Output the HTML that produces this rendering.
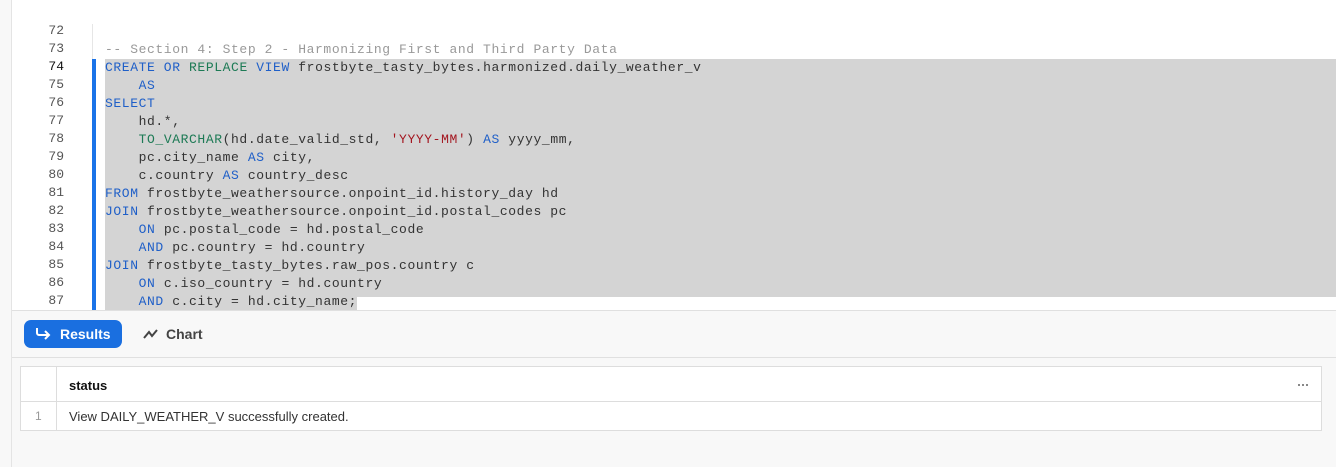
<!DOCTYPE html>
<html><head><style>
*{margin:0;padding:0;box-sizing:border-box}
body{width:1336px;height:467px;overflow:hidden;background:#f8f8f8;font-family:"Liberation Sans",sans-serif;position:relative}
.left{position:absolute;left:0;top:0;width:12px;height:467px;background:#f8f8f8;border-right:1px solid #e4e4e4}
.ed{position:absolute;left:12px;top:0;width:1324px;height:311px;background:#fff;border-bottom:1px solid #e0e0e0}
.ln{position:absolute;left:0;width:52px;text-align:right;font:13px "Liberation Mono",monospace;color:#555;line-height:18px}
.guide{position:absolute;left:80px;top:24px;width:1px;height:36px;background:#e6e6e6}
.bar{position:absolute;left:80px;top:59px;width:4px;height:251px;background:#1a73e8}
.sel{position:absolute;left:93px;top:59px;width:1231px;height:238px;background:#d4d4d4}
.sel2{position:absolute;left:93px;top:297px;width:252px;height:13px;background:#d4d4d4}
.code{position:absolute;left:93px;top:41px;font:13px "Liberation Mono",monospace;line-height:18px;color:#333;white-space:pre;letter-spacing:0.6px}
.k{color:#1f5fc8}.g{color:#1d7a55}.s{color:#a3151f}.c{color:#999}
.btn{position:absolute;left:24px;top:320px;width:98px;height:28px;background:#1a6fe0;border-radius:7px;color:#fff;font-weight:bold;font-size:14px;line-height:28px;padding-left:36px}
.chart{position:absolute;left:143px;top:320px;height:28px;line-height:28px;color:#444;font-weight:bold;font-size:14px;padding-left:23px}
.tbsep{position:absolute;left:12px;top:357px;width:1324px;height:1px;background:#e0e0e0}
.tbl{position:absolute;left:20px;top:366px;width:1302px;height:65px;background:#fff;border:1px solid #ddd}
</style></head><body>
<div class="left"></div>
<div class="ed">
<div class="guide"></div>
<div class="sel"></div><div class="sel2"></div>
<div class="bar"></div>
<div class="ln" style="top:22px">72<br>73<br><span style="color:#111">74</span><br>75<br>76<br>77<br>78<br>79<br>80<br>81<br>82<br>83<br>84<br>85<br>86<br>87</div>
<div class="code"><span class="c">-- Section 4: Step 2 - Harmonizing First and Third Party Data</span>
<span class="k">CREATE OR</span> <span class="g">REPLACE</span> <span class="k">VIEW</span> frostbyte_tasty_bytes.harmonized.daily_weather_v
    <span class="k">AS</span>
<span class="k">SELECT</span>
    hd.*,
    <span class="g">TO_VARCHAR</span>(hd.date_valid_std, <span class="s">'YYYY-MM'</span>) <span class="k">AS</span> yyyy_mm,
    pc.city_name <span class="k">AS</span> city,
    c.country <span class="k">AS</span> country_desc
<span class="k">FROM</span> frostbyte_weathersource.onpoint_id.history_day hd
<span class="k">JOIN</span> frostbyte_weathersource.onpoint_id.postal_codes pc
    <span class="k">ON</span> pc.postal_code = hd.postal_code
    <span class="k">AND</span> pc.country = hd.country
<span class="k">JOIN</span> frostbyte_tasty_bytes.raw_pos.country c
    <span class="k">ON</span> c.iso_country = hd.country
    <span class="k">AND</span> c.city = hd.city_name;</div>
</div>
<div class="btn"><svg style="position:absolute;left:11px;top:7px" width="16" height="14" viewBox="0 0 16 14"><path d="M2 1v5a2 2 0 0 0 2 2h10M10 4l4 4-4 4" fill="none" stroke="#fff" stroke-width="2"/></svg>Results</div>
<div class="chart"><svg style="position:absolute;left:0;top:8px" width="16" height="12" viewBox="0 0 16 12"><path d="M1 10l5-6 3 4 5-6" fill="none" stroke="#444" stroke-width="2"/></svg>Chart</div>
<div class="tbsep"></div>
<div class="tbl">
<div style="position:absolute;left:35px;top:0;width:1px;height:63px;background:#ddd"></div>
<div style="position:absolute;left:0;top:34px;width:1300px;height:1px;background:#ddd"></div>
<div style="position:absolute;left:48px;top:11px;font-size:13px;font-weight:bold;color:#111">status</div>
<div style="position:absolute;left:1277px;top:17px;width:10px;height:2px;background:linear-gradient(90deg,#888 2px,transparent 2px 4px,#888 4px 6px,transparent 6px 8px,#888 8px)"></div>
<div style="position:absolute;left:14px;top:42px;font-size:12px;color:#999">1</div>
<div style="position:absolute;left:48px;top:42px;font-size:13px;color:#333">View DAILY_WEATHER_V successfully created.</div>
</div>
</body></html>
